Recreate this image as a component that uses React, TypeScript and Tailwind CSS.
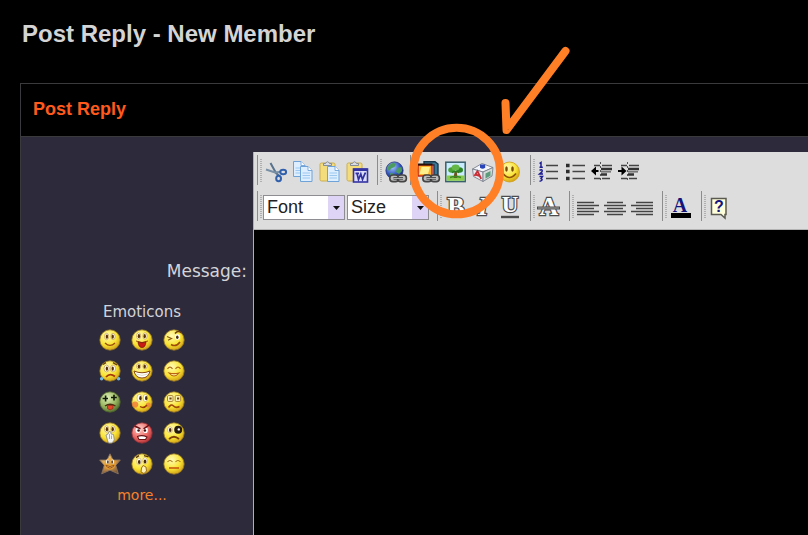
import type { ReactNode } from 'react';

const LINE = '#3a3a3c';

/* Shared gradients, referenced by the emoticons and toolbar icons */
function Gradients() {
  const stops: [string, string, string, string][] = [
    ['yellow', '#fffbb8', '#f9e434', '#cf9c14'],
    ['green', '#dff0b8', '#98b660', '#4f6a2c'],
    ['red', '#ffd2cc', '#ec6a66', '#b03036'],
    ['star', '#f8d078', '#c88f45', '#7c5a38'],
    ['sphere', '#a8c8ff', '#3258c0', '#14226e'],
  ];
  return (
    <svg width="0" height="0" className="absolute" aria-hidden="true">
      <defs>
        {stops.map(([id, a, b, c]) => (
          <radialGradient key={id} id={id} cx="0.38" cy="0.3" r="0.74">
            <stop offset="0" stopColor={a} />
            <stop offset="0.6" stopColor={b} />
            <stop offset="1" stopColor={c} />
          </radialGradient>
        ))}
      </defs>
    </svg>
  );
}

function Face({ fill = 'url(#yellow)', edge = '#94752a', children }: { fill?: string; edge?: string; children: ReactNode }) {
  return (
    <svg width="22" height="22" viewBox="0 0 22 22" fill="none" aria-hidden="true">
      <circle cx="11" cy="11" r="10.2" fill={fill} stroke={edge} strokeWidth="0.8" />
      {children}
    </svg>
  );
}

function Eyes({ y = 7.5, rx = 2.1, ry = 3.2 }: { y?: number; rx?: number; ry?: number }) {
  return (
    <>
      <ellipse cx="7.6" cy={y} rx={rx} ry={ry} fill="#fff" stroke="#b88a28" strokeWidth="0.6" />
      <ellipse cx="14" cy={y} rx={rx} ry={ry} fill="#fff" stroke="#b88a28" strokeWidth="0.6" />
      <ellipse cx="7.9" cy={y + 0.2} rx="1.2" ry="2.1" fill="#5a3408" />
      <ellipse cx="13.7" cy={y + 0.2} rx="1.2" ry="2.1" fill="#5a3408" />
    </>
  );
}

const emoticons: { name: string; art: ReactNode }[] = [
  {
    name: 'Smile',
    art: (
      <Face>
        <Eyes />
        <path d="M6 14Q11 18.8 16 14" stroke="#9c4a0c" strokeWidth="1.3" />
      </Face>
    ),
  },
  {
    name: 'Big smile',
    art: (
      <Face>
        <Eyes y={7} />
        <path d="M5 12Q11 15 17 12" stroke="#9c4a0c" strokeWidth="1" />
        <path d="M7 13Q11 14.5 15 13Q14.5 18.5 11 18.5Q7.5 18.5 7 13Z" fill="#c81c14" stroke="#701008" strokeWidth="0.7" />
      </Face>
    ),
  },
  {
    name: 'Wink',
    art: (
      <Face>
        <path d="M4 7.5L8.5 9.5L5 11.2" stroke="#8a5a10" strokeWidth="1.2" />
        <ellipse cx="14.5" cy="8" rx="2.6" ry="2.8" fill="#fff" />
        <ellipse cx="14.3" cy="8.2" rx="1.3" ry="1.7" fill="#4a2c08" />
        <path d="M12 4.5Q15 1 18.5 4" stroke="#6b3c08" strokeWidth="1.5" />
        <path d="M8 15.5Q13 18.5 17 13" stroke="#9c4a0c" strokeWidth="1.5" />
      </Face>
    ),
  },
  {
    name: 'Cry',
    art: (
      <Face>
        <Eyes y={8.5} rx={2.6} ry={3.4} />
        <path d="M4 4.5L7 2.6M14 2.6L18 5" stroke="#6b3c08" strokeWidth="1.3" />
        <path d="M7 17Q11 12.5 16 16.5" stroke="#a8380c" strokeWidth="1.8" />
        <circle cx="2.6" cy="18.8" r="1.7" fill="#74b8e0" />
        <circle cx="19.6" cy="18.8" r="1.7" fill="#74b8e0" />
      </Face>
    ),
  },
  {
    name: 'Grin',
    art: (
      <Face>
        <Eyes y={6.3} ry={2.6} />
        <path d="M3 11Q11 14.5 19 11Q17.5 18 11 18Q4.5 18 3 11Z" fill="#fff" stroke="#8a4a10" strokeWidth="1" />
        <path d="M5 14Q11 16.8 17 14" stroke="#c9c4a0" strokeWidth="0.6" />
      </Face>
    ),
  },
  {
    name: 'Happy',
    art: (
      <Face>
        <path d="M4.5 8.8Q7 5.5 9.5 8.8M12.5 8.8Q15 5.5 17.5 8.8" stroke="#b06a14" strokeWidth="1.2" />
        <path d="M6 13Q11 14.2 16 13Q11 19 6 13Z" fill="#fff2a0" stroke="#b86414" strokeWidth="1.1" />
      </Face>
    ),
  },
  {
    name: 'Dead',
    art: (
      <Face fill="url(#green)" edge="#52682c">
        <path d="M3.6 7.5H9M6.6 4.6V10.4M12 6.5H17.8M15 3.8V9.6" stroke="#101a08" strokeWidth="1.6" />
        <path d="M6 15Q11 11.5 16.5 15" stroke="#4c3010" strokeWidth="1.4" />
        <path d="M8.5 14.5H14V17.5Q11 20.2 8.5 17.5Z" fill="#e4482c" stroke="#8c2410" strokeWidth="0.7" />
      </Face>
    ),
  },
  {
    name: 'Embarrassed',
    art: (
      <Face>
        <circle cx="4.2" cy="13.5" r="3.1" fill="#f07838" opacity="0.8" />
        <circle cx="17.2" cy="14" r="2.5" fill="#f07838" opacity="0.7" />
        <ellipse cx="8.4" cy="7" rx="2.4" ry="3.6" fill="#fff" stroke="#b88a28" strokeWidth="0.5" />
        <ellipse cx="14.4" cy="7" rx="2.3" ry="3.6" fill="#fff" stroke="#b88a28" strokeWidth="0.5" />
        <ellipse cx="9.4" cy="7.2" rx="1.2" ry="2.1" fill="#4a2c08" />
        <ellipse cx="15.2" cy="7.2" rx="1.2" ry="2.1" fill="#4a2c08" />
        <path d="M9 15.5Q13 18 16 14" stroke="#9c3a0c" strokeWidth="1.4" />
      </Face>
    ),
  },
  {
    name: 'Confused',
    art: (
      <Face>
        <rect x="4.5" y="4.6" width="5.5" height="5.8" rx="1" fill="#fff6c0" stroke="#a0781c" strokeWidth="0.9" />
        <rect x="12.2" y="4.6" width="5.5" height="5.8" rx="1" fill="#fff6c0" stroke="#a0781c" strokeWidth="0.9" />
        <path d="M6.4 7.5H8.6M14 7.5H16.2" stroke="#6a4408" strokeWidth="2" />
        <path d="M5.5 16.5Q8 12.5 10.5 15T16.5 15.5" stroke="#a04a0c" strokeWidth="1.6" />
      </Face>
    ),
  },
  {
    name: 'Oops',
    art: (
      <Face>
        <Eyes y={7} />
        <path d="M8.5 18.5L7 13L9 12L10 9.5L12 10V12L14.5 12.5L15.3 18L13 21H9.5Z" fill="#f4f4f0" stroke="#85857c" strokeWidth="0.8" />
        <path d="M10.5 12V17M12.5 13.5V17" stroke="#8c8c86" strokeWidth="0.7" />
      </Face>
    ),
  },
  {
    name: 'Angry',
    art: (
      <Face fill="url(#red)" edge="#923036">
        <ellipse cx="7" cy="8.2" rx="2.3" ry="2.9" fill="#fff" />
        <ellipse cx="14.5" cy="8.2" rx="2.3" ry="2.9" fill="#fff" />
        <circle cx="7.6" cy="8.5" r="1.3" fill="#401010" />
        <circle cx="13.9" cy="8.5" r="1.3" fill="#401010" />
        <path d="M3.5 4L9.5 6.8M18 3.2L12.5 6.8" stroke="#6a1214" strokeWidth="1.5" />
        <path d="M6.5 14.5Q11 12.5 16 15L14.5 17.5H8Z" fill="#fff" stroke="#6a1214" strokeWidth="1.1" />
      </Face>
    ),
  },
  {
    name: 'Black eye',
    art: (
      <Face>
        <circle cx="15.2" cy="7.8" r="4" fill="#241a10" />
        <circle cx="15.8" cy="7.4" r="1.2" fill="#fff" />
        <ellipse cx="7" cy="7.8" rx="2.5" ry="3" fill="#fff" stroke="#b88a28" strokeWidth="0.5" />
        <ellipse cx="7.2" cy="8" rx="1.3" ry="1.9" fill="#4a2c08" />
        <path d="M6 17Q11 12.5 16 17" stroke="#80400c" strokeWidth="1.7" />
      </Face>
    ),
  },
  {
    name: 'Star',
    art: (
      <svg width="22" height="22" viewBox="0 0 22 22" fill="none" aria-hidden="true">
        <path d="M11 0.8L14 7H21.3L16.8 12.4L19.3 20.8L11 17.2L2.7 20.8L5.2 12.4L0.7 7H8Z" fill="url(#star)" stroke="#8a735c" strokeWidth="0.9" />
        <circle cx="11" cy="11" r="5.8" fill="#eaa030" opacity="0.75" />
        <ellipse cx="8.6" cy="8.7" rx="1.6" ry="2.3" fill="#fff" />
        <ellipse cx="13.4" cy="8.7" rx="1.6" ry="2.3" fill="#fff" />
        <path d="M8.9 7.6V10.4M13.1 7.6V10.4" stroke="#402008" strokeWidth="1.4" />
        <path d="M6.8 12.5Q11 14.5 15.2 12.5Q11 17.5 6.8 12.5Z" fill="#ffe8a0" stroke="#904408" strokeWidth="0.9" />
      </svg>
    ),
  },
  {
    name: 'Thinking',
    art: (
      <Face>
        <ellipse cx="8" cy="8.4" rx="2.3" ry="3.4" fill="#fff" stroke="#b88a28" strokeWidth="0.5" />
        <ellipse cx="14" cy="7.8" rx="2.2" ry="3.2" fill="#fff" stroke="#b88a28" strokeWidth="0.5" />
        <ellipse cx="8.2" cy="9" rx="1.3" ry="2" fill="#4a2c08" />
        <ellipse cx="14" cy="8.4" rx="1.3" ry="2" fill="#4a2c08" />
        <path d="M5 4.6L8 2.6M13 2.6L17.5 3.8" stroke="#5a3408" strokeWidth="1.3" />
        <path d="M10 19L10.5 15L12 12.5L15 14L15.5 18L13 20.5Z" fill="#fff0b8" stroke="#9c7018" strokeWidth="1" />
      </Face>
    ),
  },
  {
    name: 'Sleepy',
    art: (
      <Face>
        <path d="M4.5 9Q7 6 9.5 9M12.5 9Q15 6 17.5 9" stroke="#a87418" strokeWidth="1.1" />
        <path d="M6 15H16" stroke="#c4500c" strokeWidth="1.5" />
      </Face>
    ),
  },
];

/* Toolbar cell: the drawing area is 0..22, the rest is margin */
function Icon({ children }: { children: ReactNode }) {
  return (
    <svg width="27" height="30" viewBox="-2 -6 27 30" fill="none" aria-hidden="true">
      {children}
    </svg>
  );
}

function Chain() {
  return (
    <g>
      <rect x="4.8" y="14" width="8.8" height="6.6" rx="3.2" fill="#bcbcbc" stroke="#444" strokeWidth="1.6" />
      <rect x="12.6" y="14" width="8.8" height="6.6" rx="3.2" fill="#bcbcbc" stroke="#444" strokeWidth="1.6" />
      <path d="M8.5 17.3H18" stroke="#333" strokeWidth="2.6" />
      <path d="M8.5 17.3H18" stroke="#ddd" strokeWidth="0.9" />
    </g>
  );
}

function OutlinedLetter({ char, size, y, slanted }: { char: string; size: number; y: number; slanted?: boolean }) {
  return (
    <text
      x="11"
      y={y}
      textAnchor="middle"
      fontFamily="'Liberation Serif', serif"
      fontSize={size}
      fontWeight="bold"
      fontStyle={slanted ? 'italic' : 'normal'}
      fill="#fff"
      stroke="#4c4c4c"
      strokeWidth="2.4"
      paintOrder="stroke"
    >
      {char}
    </text>
  );
}

function Sheet({ x, y }: { x: number; y: number }) {
  return (
    <g transform={`translate(${x} ${y})`}>
      <path d="M0.5 0.5H8L12 4.5V15.5H0.5Z" fill="#dceeff" stroke="#6fa3d8" />
      <path d="M8 0.5V4.5H12" fill="#fff" stroke="#6fa3d8" strokeWidth="0.9" />
      <path d="M2.5 7H10M2.5 9.5H10M2.5 12H10" stroke="#9cc8f0" />
    </g>
  );
}

function Clipboard() {
  return (
    <g>
      <rect x="1" y="2" width="15" height="18" rx="1.5" fill="#f3dc7c" stroke="#ccae50" />
      <path d="M4.5 4.5V2.5H6.5Q8.5 -1 10.5 2.5H12.5V4.5Z" fill="#d8dce4" stroke="#7c8494" strokeWidth="0.9" />
    </g>
  );
}

const cut = (
  <Icon>
    <path d="M5.5 2L11 12L14 14.5" stroke="#59738c" strokeWidth="2" />
    <path d="M1 8.5L10 11.5L16 10.8" stroke="#7890a6" strokeWidth="2" />
    <ellipse cx="18.2" cy="11" rx="2.9" ry="2.3" stroke="#3060ac" strokeWidth="2" />
    <ellipse cx="13.6" cy="17.5" rx="2.4" ry="2.8" stroke="#3060ac" strokeWidth="2" />
  </Icon>
);

const copy = (
  <Icon>
    <Sheet x={1} y={0} />
    <Sheet x={8} y={5} />
  </Icon>
);

const paste = (
  <Icon>
    <Clipboard />
    <Sheet x={8} y={5} />
  </Icon>
);

const pasteWord = (
  <Icon>
    <Clipboard />
    <rect x="7.5" y="8" width="14" height="13" fill="#dcdcf8" stroke="#3434a4" strokeWidth="1.6" />
    <path d="M7.5 8.8H21.5" stroke="#3434a4" strokeWidth="2.4" />
    <path d="M9.5 12.4H13M11 12.4L12.5 18.5L14.8 13L16.5 18.5L19 12.4H20" stroke="#3030a0" strokeWidth="1.7" />
  </Icon>
);

const insertLink = (
  <Icon>
    <circle cx="9.5" cy="9.5" r="8.6" fill="url(#sphere)" stroke="#203078" strokeWidth="0.8" />
    <path d="M4 4L8 1.8L11 3L9.5 6L6 7.5L4.5 10L2 8.5ZM12 7L16.5 6L17 10L14 13L11 11ZM5 12L8.5 12.5L8 16L5.5 14.5Z" fill="#4c9c60" />
    <Chain />
  </Icon>
);

const insertFile = (
  <Icon>
    <path d="M6 0.8H17L20 3V14H16V4H6Z" fill="#3d7896" stroke="#18384c" strokeWidth="1.4" />
    <rect x="0" y="4" width="14" height="11" fill="#ffb32c" stroke="#c02014" strokeWidth="1.4" />
    <path d="M-0.5 3.5H14.5" stroke="#281008" strokeWidth="2" />
    <path d="M1.5 13L3.5 6H12L10 13Z" fill="#fff08c" />
    <Chain />
  </Icon>
);

const insertImage = (
  <Icon>
    <rect x="0.8" y="1.2" width="19.4" height="19.4" fill="#c8ecfb" stroke="#38606c" strokeWidth="1.5" />
    <path d="M1.6 14.5H19.4V19.8H1.6Z" fill="#8ccc4c" />
    <path d="M9.6 10H11.8L12.4 17H8.6Z" fill="#6c5420" />
    <ellipse cx="6.6" cy="9" rx="3.4" ry="2.8" fill="#48a034" />
    <ellipse cx="14.6" cy="9" rx="3.4" ry="2.8" fill="#2c8424" />
    <ellipse cx="10.6" cy="6.4" rx="4" ry="3" fill="#64b848" />
    <path d="M7 11.5Q10.5 9.5 14 11.5" stroke="#2c7c20" strokeWidth="1.6" />
    <path d="M5 16.5Q10.5 14.6 16 16.5" stroke="#3c8c24" strokeWidth="1.4" />
  </Icon>
);

const insertObject = (
  <Icon>
    <path d="M0.5 8L10 2.5L21 6.5L11 11Z" fill="#f4f6fb" stroke="#7a808c" strokeWidth="0.9" />
    <path d="M0.5 8L11 11V20.5L1.5 15.5Z" fill="#ececf2" stroke="#7a808c" strokeWidth="0.9" />
    <path d="M21 6.5L11 11V20.5L20 15Z" fill="#d2dbd8" stroke="#7a808c" strokeWidth="0.9" />
    <path d="M8 3.5H13.2V6.8Q10.6 8.6 8 6.8Z" fill="#2844b8" />
    <path d="M2.4 15L5.5 10.2L9.2 17.8M3.6 13.5L8 15.2" stroke="#c83038" strokeWidth="1.9" />
    <path d="M13.5 12.5L18.5 10V14.8L13.5 17.4Z" fill="#5c9c7c" />
  </Icon>
);

const insertSmiley = (
  <Icon>
    <circle cx="10.5" cy="11" r="10" fill="url(#yellow)" stroke="#d09c10" strokeWidth="0.8" />
    <ellipse cx="7.5" cy="8" rx="1.3" ry="2.8" fill="#7c4a08" />
    <ellipse cx="13.5" cy="8" rx="1.3" ry="2.8" fill="#7c4a08" />
    <path d="M4 12.5Q10.5 20.5 17 12.5" stroke="#90540c" strokeWidth="1.6" />
  </Icon>
);

const orderedList = (
  <Icon>
    <path d="M1.5 2.5L3 1.5V6M1.5 6.3H4.8M1.5 9.2Q5 8 4 10.7L1.5 13H5M1.5 15.4H4.5L3 17.6Q5.8 19 1.5 20.4" stroke="#1c1c94" strokeWidth="1.5" />
    <path d="M8 4.5H20M8 10.5H20M8 17.5H20" stroke="#444" strokeWidth="1.5" />
  </Icon>
);

const bulletList = (
  <Icon>
    <path d="M1 4.5H4.6M1 10.5H4.6M1 17.5H4.6" stroke="#2c2c2c" strokeWidth="3.6" />
    <path d="M7.5 4.5H20M7.5 10.5H20M7.5 17.5H20" stroke="#444" strokeWidth="1.5" />
  </Icon>
);

function IndentLines() {
  return (
    <>
      <path d="M2 4.5H8M10 4.5H20M2 17.5H8M10 17.5H18" stroke="#444" strokeWidth="1.5" />
      <path d="M9 8H20M9 13.5H15" stroke="#333" strokeWidth="2.4" />
      <path d="M9 10.8H19" stroke="#777" strokeWidth="1.6" />
      <path d="M8.5 1V21" stroke="#555" strokeDasharray="2 2" />
    </>
  );
}

const outdent = (
  <Icon>
    <IndentLines />
    <path d="M-1 10L4 5.6V14.4Z" fill="#000" />
    <path d="M2 10H6.5" stroke="#000" strokeWidth="2" />
  </Icon>
);

const indent = (
  <Icon>
    <IndentLines />
    <path d="M7.5 10L2.5 5.6V14.4Z" fill="#000" />
    <path d="M-1 10H4" stroke="#000" strokeWidth="2" />
  </Icon>
);

const bold = (
  <Icon>
    <OutlinedLetter char="B" size={26} y={18} />
  </Icon>
);

const italic = (
  <Icon>
    <OutlinedLetter char="I" size={26} y={18} slanted />
  </Icon>
);

const underline = (
  <Icon>
    <OutlinedLetter char="U" size={23} y={15} />
    <path d="M2 20H20" stroke="#4c4c4c" strokeWidth="2.4" />
  </Icon>
);

const strike = (
  <Icon>
    <OutlinedLetter char="A" size={26} y={18} />
    <path d="M-1 11H22" stroke="#4c4c4c" strokeWidth="3" />
    <path d="M0 11H21" stroke="#bbb" strokeWidth="0.8" />
  </Icon>
);

const alignLeft = (
  <Icon>
    <path d="M0 5.5H17M0 8.5H22M0 11.5H17M0 14.5H22M0 17.5H17" stroke="#444" strokeWidth="1.6" />
  </Icon>
);

const alignCenter = (
  <Icon>
    <path d="M3 5.5H19M0 8.5H22M3 11.5H19M0 14.5H22M3 17.5H19" stroke="#444" strokeWidth="1.6" />
  </Icon>
);

const alignRight = (
  <Icon>
    <path d="M5 5.5H22M0 8.5H22M5 11.5H22M0 14.5H22M5 17.5H22" stroke="#444" strokeWidth="1.6" />
  </Icon>
);

const textColor = (
  <Icon>
    <text x="10" y="15" textAnchor="middle" fontFamily="'Liberation Serif', serif" fontSize="20" fontWeight="bold" fill="#14147c">
      A
    </text>
    <rect x="1" y="16" width="20" height="5" fill="#000" />
  </Icon>
);

const help = (
  <Icon>
    <path d="M2.5 1.5H17V17.5H16V21L12 17.5H2.5Z" fill="#ffffdc" stroke="#5a5a50" strokeWidth="1.5" />
    <text x="9.8" y="15" textAnchor="middle" fontFamily="'Liberation Sans', sans-serif" fontSize="16" fontWeight="bold" fill="#14147c">
      ?
    </text>
  </Icon>
);

type Tool = [label: string, icon: ReactNode];

const clipboardTools: Tool[] = [
  ['Cut', cut],
  ['Copy', copy],
  ['Paste', paste],
  ['Paste from Word', pasteWord],
];
const insertTools: Tool[] = [
  ['Insert file', insertFile],
  ['Insert image', insertImage],
  ['Insert object', insertObject],
  ['Insert emoticon', insertSmiley],
];
const listTools: Tool[] = [
  ['Ordered list', orderedList],
  ['Bullet list', bulletList],
  ['Outdent', outdent],
  ['Indent', indent],
];
const styleTools: Tool[] = [
  ['Bold', bold],
  ['Italic', italic],
  ['Underline', underline],
];
const alignTools: Tool[] = [
  ['Align left', alignLeft],
  ['Align center', alignCenter],
  ['Align right', alignRight],
];

function Grip() {
  return (
    <svg width="6" height="30" viewBox="0 0 6 30" className="shrink-0" aria-hidden="true">
      <path d="M0.5 0V30" stroke="#8c8c8c" />
      <path d="M4 4V27" stroke="#b0b0b0" strokeWidth="2" strokeDasharray="1 1" />
    </svg>
  );
}

function ToolGroup({ tools, tight }: { tools: Tool[]; tight?: boolean }) {
  return (
    <div className={tight ? 'flex' : 'flex pr-[6px]'}>
      <Grip />
      {tools.map(([label, icon]) => (
        <button key={label} type="button" aria-label={label} className="h-[30px] w-[27px]">
          {icon}
        </button>
      ))}
    </div>
  );
}

function ToolSelect({ label }: { label: string }) {
  return (
    <div className="relative w-[82px]">
      <select
        aria-label={label}
        className="h-[25px] w-full appearance-none border border-[#8e8e92] bg-white pl-[3px] text-[18px] leading-[23px] text-[#222]"
      >
        <option>{label}</option>
      </select>
      <span className="pointer-events-none absolute top-px right-px bottom-px flex w-4 items-center justify-center bg-[#ddd4f6]">
        <svg width="7" height="4" viewBox="0 0 7 4" aria-hidden="true">
          <path d="M0 0H7L3.5 4Z" fill="#111" />
        </svg>
      </span>
    </div>
  );
}

function Toolbar() {
  return (
    <div className="flex flex-col gap-[6px] border-b border-[#b4b4b4] bg-[#dddddd] pt-[3px] pb-2 pl-[3px]">
      <div className="flex">
        <ToolGroup tools={clipboardTools} />
        <ToolGroup tools={[['Insert link', insertLink]]} tight />
        <ToolGroup tools={insertTools} />
        <ToolGroup tools={listTools} />
      </div>
      <div className="flex">
        <div className="flex pr-2">
          <Grip />
          <div className="flex items-center gap-[2px] pt-[3px]">
            <ToolSelect label="Font" />
            <ToolSelect label="Size" />
          </div>
        </div>
        <ToolGroup tools={styleTools} />
        <ToolGroup tools={[['Strikethrough', strike]]} />
        <ToolGroup tools={alignTools} />
        <ToolGroup tools={[['Text color', textColor]]} />
        <ToolGroup tools={[['Help', help]]} />
      </div>
    </div>
  );
}

function EmoticonPicker() {
  return (
    <div className="mt-[19px] flex w-[210px] flex-col items-center self-end">
      <h3 className="text-[15px] leading-5">Emoticons</h3>
      <div className="mt-[7px] grid grid-cols-3 gap-x-[10px] gap-y-[9px]">
        {emoticons.map(({ name, art }) => (
          <button key={name} type="button" aria-label={name}>
            {art}
          </button>
        ))}
      </div>
      <a href="#more" className="mt-[10px] text-[14px] leading-5 text-[#f5822a]">
        more...
      </a>
    </div>
  );
}

/* Hand-drawn ring and tick pointing at the image button */
function Marker() {
  return (
    <svg width="170" height="180" viewBox="0 0 170 180" fill="none" className="pointer-events-none absolute top-[44px] left-[408px]" aria-hidden="true">
      <circle cx="48.7" cy="127" r="43.3" stroke="#ff7f27" strokeWidth="8" />
      <path d="M97.5 59L98.5 86L157.5 7" stroke="#ff7f27" strokeWidth="8" strokeLinecap="round" strokeLinejoin="round" />
    </svg>
  );
}

export default function App() {
  return (
    <div className="relative flex min-h-screen flex-col bg-black pt-[18px] pl-5 font-['Liberation_Sans',sans-serif]">
      <Gradients />
      <h1 className="pl-[2px] text-2xl leading-8 font-bold text-[#d4d4d4]">Post Reply - New Member</h1>

      <div className="mt-[33px] flex flex-1 flex-col border-t border-l" style={{ borderColor: LINE }}>
        <h2 className="border-b px-3 pt-[13px] pb-[15px] text-[18px] leading-6 font-bold text-[#ff5a1c]" style={{ borderColor: LINE }}>
          Post Reply
        </h2>

        <div className="flex flex-1 bg-[#2d2b3b]">
          {/* Labels and emoticons */}
          <div className="flex w-[232px] shrink-0 flex-col pt-[122px] pr-[6px] font-['DejaVu_Sans',sans-serif] text-[#d4d4d8]">
            <label htmlFor="message" className="text-right text-[17px] leading-6">
              Message:
            </label>
            <EmoticonPicker />
          </div>

          {/* Editor */}
          <div className="flex min-w-0 flex-1 flex-col pt-[15px]">
            <div className="flex flex-1 flex-col border-l border-[#b0b0b4]">
              <Toolbar />
              <textarea id="message" className="w-full flex-1 resize-none bg-black p-2 text-[#d4d4d4] outline-none" />
            </div>
          </div>
        </div>
      </div>

      <Marker />
    </div>
  );
}
